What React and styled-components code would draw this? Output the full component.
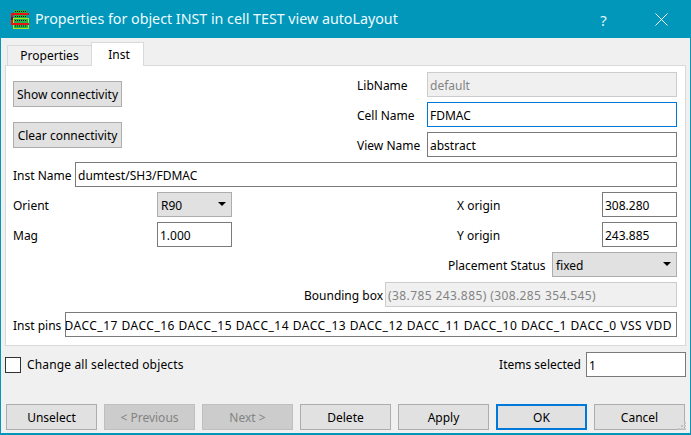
import React from 'react';
import styled, { createGlobalStyle } from 'styled-components';

const Global = createGlobalStyle`
  html, body { margin: 0; padding: 0; background: #f0f0f0; }
  * { box-sizing: border-box; }
`;

const Dialog = styled.div`
  position: relative;
  width: 691px;
  height: 435px;
  display: flex;
  flex-direction: column;
  border: 1px solid #0097bb;
  border-bottom-width: 2px;
  background: #f0f0f0;
  color: #000;
  font-family: "Noto Sans", "Open Sans", sans-serif;
  font-size: 12px;
  overflow: hidden;
`;

const TitleBar = styled.div`
  height: 37px;
  flex: none;
  display: flex;
  align-items: center;
  background: #0097bb;
  color: #fff;
  padding-left: 10px;
`;

const Title = styled.div`
  margin-left: 6px;
  padding-bottom: 2px;
  font-size: 14.25px;
  flex: 1;
  white-space: nowrap;
  color: #eefafd;
`;

const TitleButton = styled.div`
  width: ${p => p.$w}px;
  height: 37px;
  display: flex;
  align-items: center;
  justify-content: center;
  font-size: 15px;
  color: #e4f5f9;
`;

const Body = styled.div`
  flex: 1;
  display: flex;
  flex-direction: column;
  padding: 4px 4px 3px;
`;

const TabBar = styled.div`
  height: 24px;
  display: flex;
  align-items: flex-end;
  padding-left: 2px;
  margin-bottom: -1px;
  position: relative;
  z-index: 1;
`;

const Tab = styled.div`
  height: ${p => (p.$active ? 24 : 21)}px;
  width: ${p => p.$w}px;
  display: flex;
  align-items: center;
  justify-content: center;
  padding-left: ${p => (p.$active ? 3 : 0)}px;
  background: ${p => (p.$active ? '#fff' : '#f0f0f0')};
  border: 1px solid #d9d9d9;
  border-bottom: ${p => (p.$active ? 'none' : '1px solid #d9d9d9')};
  margin-left: ${p => (p.$active ? -1 : 0)}px;
`;

const Pane = styled.div`
  height: 281px;
  background: #fff;
  border: 1px solid #d9d9d9;
  padding: 6px 8px 0 7px;
  display: flex;
  flex-direction: column;
  gap: 5px;
`;

const Top = styled.div`
  display: flex;
  justify-content: space-between;
`;

const LeftButtons = styled.div`
  display: flex;
  flex-direction: column;
  gap: 15px;
  padding-top: 9px;
`;

const RightFields = styled.div`
  display: flex;
  flex-direction: column;
  gap: 5px;
`;

const Row = styled.div`
  height: 25px;
  display: flex;
  align-items: center;
`;

const Label = styled.div`
  width: ${p => (p.$w ? `${p.$w}px` : 'auto')};
  margin-left: ${p => p.$ml || 0}px;
  padding-top: 1px;
  white-space: nowrap;
  flex: none;
`;

const Field = styled.div`
  height: 25px;
  width: ${p => (p.$w ? `${p.$w}px` : 'auto')};
  flex: ${p => (p.$w ? 'none' : 1)};
  display: flex;
  align-items: center;
  padding: 2px 2px 0;
  white-space: nowrap;
  overflow: hidden;
  letter-spacing: ${p => p.$ls || 0}px;
  background: ${p => (p.$disabled ? '#f0f0f0' : '#fff')};
  color: ${p => (p.$disabled ? '#838383' : '#000')};
  border: 1px solid ${p => (p.$focus ? '#0078d7' : p.$disabled ? '#cccccc' : '#7a7a7a')};
`;

const ClippedField = styled(Field)`
  justify-content: flex-end;
  padding-right: 4px;
`;

const Combo = styled.div`
  height: 25px;
  width: ${p => p.$w}px;
  flex: none;
  display: flex;
  align-items: center;
  justify-content: space-between;
  padding: 1px 5px 0 3px;
  background: #e1e1e1;
  border: 1px solid #adadad;
`;

const Arrow = styled.div`
  width: 0;
  height: 0;
  margin-top: -3px;
  border-left: 4px solid transparent;
  border-right: 4px solid transparent;
  border-top: 4px solid #000;
`;

const Button = styled.div`
  width: ${p => p.$w || 91}px;
  height: 26px;
  display: flex;
  align-items: center;
  justify-content: center;
  white-space: nowrap;
  background: ${p => (p.$disabled ? '#cccccc' : '#e1e1e1')};
  color: ${p => (p.$disabled ? '#838383' : '#000')};
  border: ${p => (p.$default ? '2px solid #0078d7' : `1px solid ${p.$disabled ? '#bfbfbf' : '#adadad'}`)};
`;

const OptionRow = styled.div`
  display: flex;
  align-items: center;
  justify-content: space-between;
  height: 25px;
  margin-top: 6px;
`;

const CheckWrap = styled.div`
  display: flex;
  align-items: center;
  gap: 6px;
  letter-spacing: 0.15px;
`;

const Check = styled.div`
  width: 16px;
  height: 16px;
  background: #fff;
  border: 1px solid #333;
`;

const Counter = styled.div`
  display: flex;
  align-items: center;
  gap: 5px;
`;

const Footer = styled.div`
  display: flex;
  gap: 7px;
  margin-top: auto;
  padding-left: 1px;
`;

const Grip = styled.svg`
  position: absolute;
  right: 3px;
  bottom: 1px;
`;

const AppIcon = () => (
  <svg width="18" height="20" viewBox="0 0 18 20">
    <rect x="3" y="0" width="13" height="3" fill="#22b14c" />
    <rect x="3" y="5" width="13" height="3" fill="#22b14c" />
    <rect x="2" y="8" width="16" height="11" fill="#a8e61d" />
    <rect x="3" y="9" width="14" height="9" fill="#22b14c" />
    <path d="M4 1.5h11M4 6.5h11M4 10.5h12M4 16h12" stroke="#111" strokeDasharray="1 1" fill="none" />
    <path d="M18 4H1v10h17" stroke="#ee1111" strokeWidth="2" fill="none" />
    <rect x="0" y="7" width="2" height="3" fill="#7a1010" />
  </svg>
);

const CloseIcon = () => (
  <svg width="13" height="13" viewBox="0 0 13 13">
    <path d="M.5.5l12 12M12.5.5l-12 12" stroke="#fff" fill="none" />
  </svg>
);

export default function App() {
  return (
    <Dialog>
      <Global />
      <TitleBar>
        <AppIcon />
        <Title>Properties for object INST in cell TEST view autoLayout</Title>
        <TitleButton $w={59}>?</TitleButton>
        <TitleButton $w={57}><CloseIcon /></TitleButton>
      </TitleBar>
      <Body>
        <TabBar>
          <Tab $w={85}>Properties</Tab>
          <Tab $w={53} $active>Inst</Tab>
        </TabBar>
        <Pane>
          <Top>
            <LeftButtons>
              <Button $w={109}>Show connectivity</Button>
              <Button $w={109}>Clear connectivity</Button>
            </LeftButtons>
            <RightFields>
              <Row><Label $w={70}>LibName</Label><Field $w={250} $disabled>default</Field></Row>
              <Row><Label $w={70}>Cell Name</Label><Field $w={250} $focus>FDMAC</Field></Row>
              <Row><Label $w={70}>View Name</Label><Field $w={250}>abstract</Field></Row>
            </RightFields>
          </Top>
          <Row><Label $w={62}>Inst Name</Label><Field>dumtest/SH3/FDMAC</Field></Row>
          <Row>
            <Label $w={144}>Orient</Label>
            <Combo $w={75}>R90<Arrow /></Combo>
            <Label $w={145} $ml={225}>X origin</Label>
            <Field $w={75}>308.280</Field>
          </Row>
          <Row>
            <Label $w={144}>Mag</Label>
            <Field $w={75}>1.000</Field>
            <Label $w={145} $ml={225}>Y origin</Label>
            <Field $w={75}>243.885</Field>
          </Row>
          <Row>
            <Label $ml={435} $w={104}>Placement Status</Label>
            <Combo $w={125}>fixed<Arrow /></Combo>
          </Row>
          <Row>
            <Label $ml={291} $w={81}>Bounding box</Label>
            <Field $disabled $ls={0.4}>(38.785 243.885) (308.285 354.545)</Field>
          </Row>
          <Row>
            <Label $w={52}>Inst pins</Label>
            <ClippedField $ls={0.5}>DACC_17 DACC_16 DACC_15 DACC_14 DACC_13 DACC_12 DACC_11 DACC_10 DACC_1 DACC_0 VSS VDD</ClippedField>
          </Row>
        </Pane>
        <OptionRow>
          <CheckWrap><Check />Change all selected objects</CheckWrap>
          <Counter>Items selected<Field $w={100}>1</Field></Counter>
        </OptionRow>
        <Footer>
          <Button>Unselect</Button>
          <Button $disabled>&lt; Previous</Button>
          <Button $disabled>Next &gt;</Button>
          <Button>Delete</Button>
          <Button>Apply</Button>
          <Button $default>OK</Button>
          <Button>Cancel</Button>
        </Footer>
      </Body>
      <Grip width="12" height="12" viewBox="0 0 12 12">
        <path d="M9 2h2v2H9zM6 5h2v2H6zM9 5h2v2H9zM3 8h2v2H3zM6 8h2v2H6zM9 8h2v2H9z" fill="#c4c4c4" />
      </Grip>
    </Dialog>
  );
}
